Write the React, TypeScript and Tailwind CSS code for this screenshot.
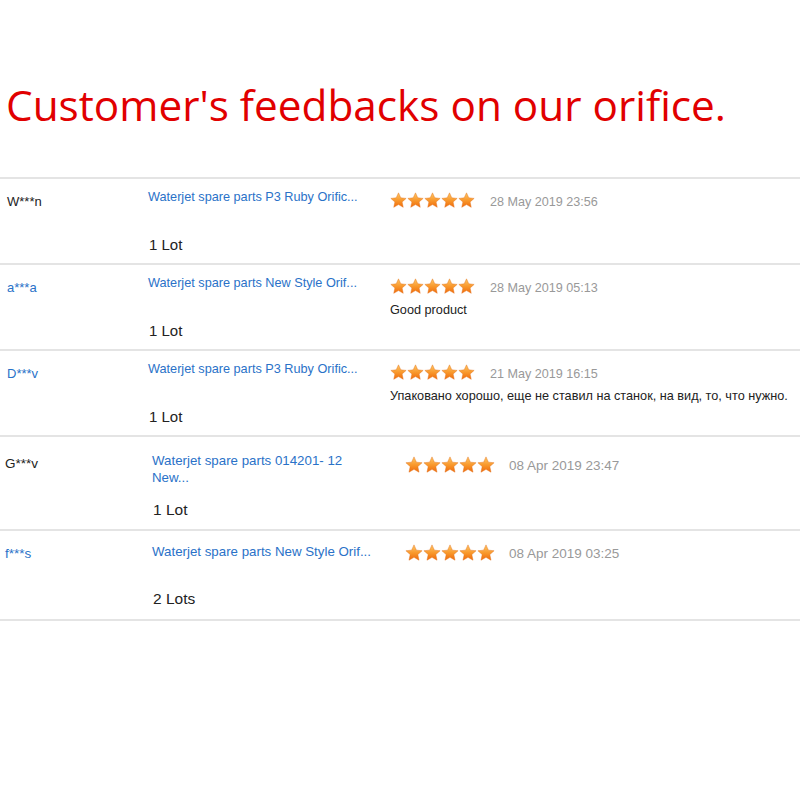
import React from "react";

const Star = ({ size }: { size: number }) => (
  <svg width={size} height={size} viewBox="0 0 24 24" className="block">
    <defs>
      <linearGradient id="sg" x1="0" y1="0" x2="0" y2="1">
        <stop offset="0%" stopColor="#ffc766" />
        <stop offset="55%" stopColor="#f8962a" />
        <stop offset="100%" stopColor="#ee6a0c" />
      </linearGradient>
    </defs>
    <path
      d="M12 1.2l3.2 7 7.6.8-5.7 5.1 1.6 7.5L12 17.8l-6.7 3.8 1.6-7.5L1.2 9l7.6-.8z"
      fill="url(#sg)"
      stroke="#e2711a"
      strokeWidth="0.6"
      strokeLinejoin="round"
    />
  </svg>
);

const Stars = ({ size }: { size: number }) => (
  <div className="flex">
    {[0, 1, 2, 3, 4].map((i) => (
      <Star key={i} size={size} />
    ))}
  </div>
);

type RowProps = {
  user: string;
  userBlue?: boolean;
  product: string;
  lot: string;
  date: string;
  comment?: string;
};

const Row = ({ user, userBlue, product, lot, date, comment }: RowProps) => (
  <div className="h-[86px] border-t-2 border-[#e4e4e4] flex">
    <div
      className={`w-[148px] pl-[7px] pt-[15px] text-[13px] leading-[15px] ${
        userBlue ? "text-[#2a72c8]" : "text-[#222]"
      }`}
    >
      {user}
    </div>
    <div className="w-[242px] flex flex-col">
      <div className="pt-[11px] text-[12.7px] leading-[14px] text-[#2a72c8] whitespace-nowrap">{product}</div>
      <div className="mt-[32px] text-[15px] leading-[17px] text-[#222] pl-[1px]">{lot}</div>
    </div>
    <div className="flex flex-col pt-[13px]">
      <div className="flex items-center">
        <Stars size={17} />
        <span className="ml-[15px] text-[12.6px] leading-[14px] text-[#999] mt-[2px]">{date}</span>
      </div>
      {comment && (
        <div className="mt-[8px] text-[12.7px] leading-[15px] text-[#222] whitespace-nowrap">{comment}</div>
      )}
    </div>
  </div>
);

export default function App() {
  return (
    <div className="w-[800px] h-[800px] bg-white" style={{ fontFamily: '"Liberation Sans", Arial, sans-serif' }}>
      <div className="h-[177px] pt-[79px] pl-[6px]">
        <h1
          className="text-[42.3px] leading-[52px] text-[#e10000] whitespace-nowrap"
          style={{ fontFamily: '"Open Sans", "Noto Sans", sans-serif' }}
        >
          Customer's feedbacks on our orifice.
        </h1>
      </div>
      <Row user="W***n" product="Waterjet spare parts P3 Ruby Orific..." lot="1 Lot" date="28 May 2019 23:56" />
      <Row
        user="a***a"
        userBlue
        product="Waterjet spare parts New Style Orif..."
        lot="1 Lot"
        date="28 May 2019 05:13"
        comment="Good product"
      />
      <Row
        user="D***v"
        userBlue
        product="Waterjet spare parts P3 Ruby Orific..."
        lot="1 Lot"
        date="21 May 2019 16:15"
        comment="Упаковано хорошо, еще не ставил на станок, на вид, то, что нужно."
      />
      <div className="h-[94px] border-t-2 border-[#e4e4e4] flex">
        <div className="w-[152px] pl-[5px] pt-[19px] text-[13.5px] leading-[16px] text-[#222]">G***v</div>
        <div className="w-[253px] flex flex-col">
          <div className="pt-[15px] w-[215px] text-[13.3px] leading-[17px] text-[#2a72c8]">
            Waterjet spare parts 014201- 12 New...
          </div>
          <div className="mt-[15px] text-[15.5px] leading-[18px] text-[#222] pl-[1px]">1 Lot</div>
        </div>
        <div className="flex items-center h-[18px] mt-[19px]">
          <Stars size={18} />
          <span className="ml-[14px] text-[13.5px] leading-[14px] text-[#999] mt-[2px]">08 Apr 2019 23:47</span>
        </div>
      </div>
      <div className="h-[92px] border-t-2 border-b-2 border-[#e4e4e4] flex">
        <div className="w-[152px] pl-[5px] pt-[15px] text-[13.5px] leading-[16px] text-[#2a72c8]">f***s</div>
        <div className="w-[253px] flex flex-col">
          <div className="pt-[12px] text-[13.3px] leading-[17px] text-[#2a72c8] whitespace-nowrap">
            Waterjet spare parts New Style Orif...
          </div>
          <div className="mt-[30px] text-[15.5px] leading-[18px] text-[#222] pl-[1px]">2 Lots</div>
        </div>
        <div className="flex items-center h-[18px] mt-[13px]">
          <Stars size={18} />
          <span className="ml-[14px] text-[13.5px] leading-[14px] text-[#999] mt-[2px]">08 Apr 2019 03:25</span>
        </div>
      </div>
    </div>
  );
}
